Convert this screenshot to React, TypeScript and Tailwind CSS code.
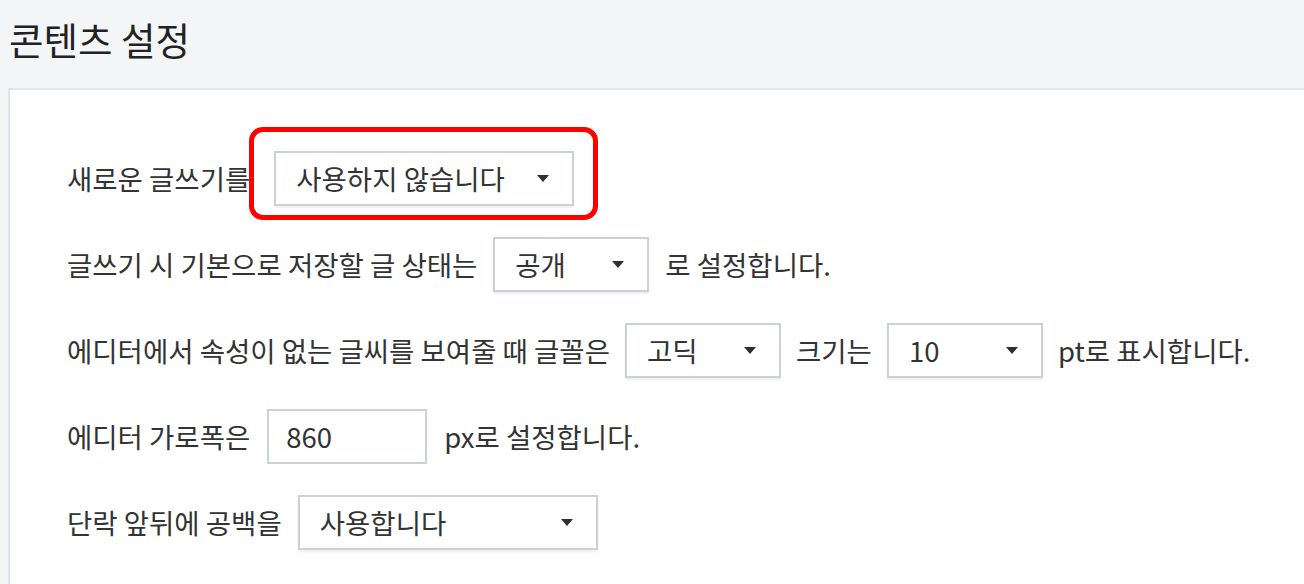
import React from "react";

const font = { fontFamily: '"Noto Sans CJK KR", "Noto Sans", sans-serif' };

function Caret() {
  return (
    <svg width="12" height="8" viewBox="0 0 12 8" className="shrink-0">
      <polygon points="0,0 12,0 6,7" fill="#2f2f2f" />
    </svg>
  );
}

function Select({ value, width }: { value: string; width: string }) {
  return (
    <div
      className={`${width} h-[55px] shrink-0 flex items-center justify-between pl-[20px] pr-[23px] border-2 border-[#cbd0da] bg-white shadow-[0_2px_2px_rgba(0,0,0,0.07)]`}
    >
      <span>{value}</span>
      <Caret />
    </div>
  );
}

export default function App() {
  return (
    <div
      className="w-[1304px] h-[584px] bg-[#f4f5f7] overflow-hidden text-[#333] flex flex-col"
      style={font}
    >
      <h1 className="text-[37.5px] leading-none text-[#222] pl-[9px] pt-[20px] h-[88px]">
        콘텐츠 설정
      </h1>
      <div className="ml-[8px] flex-1 bg-white border-l-2 border-t-2 border-[#e2e3ec] pl-[57px] pt-[61px] text-[27.5px] flex flex-col gap-[31px]">
        <div className="flex items-center gap-[24px] h-[55px]">
          <span>새로운 글쓰기를</span>
          <div className="relative">
            <Select value="사용하지 않습니다" width="w-[300px]" />
            <div className="absolute left-[-25px] top-[-24px] w-[349px] h-[93px] border-[5px] border-[#ff0000] rounded-[14px]" />
          </div>
        </div>
        <div className="flex items-center gap-[16px] h-[55px]">
          <span>글쓰기 시 기본으로 저장할 글 상태는</span>
          <Select value="공개" width="w-[156px]" />
          <span>로 설정합니다.</span>
        </div>
        <div className="flex items-center gap-[15px] h-[55px]">
          <span>에디터에서 속성이 없는 글씨를 보여줄 때 글꼴은</span>
          <Select value="고딕" width="w-[156px]" />
          <span>크기는</span>
          <Select value="10" width="w-[156px]" />
          <span>pt로 표시합니다.</span>
        </div>
        <div className="flex items-center gap-[17px] h-[55px]">
          <span>에디터 가로폭은</span>
          <div className="w-[160px] h-[55px] flex items-center pl-[17px] border-2 border-[#cbd0da] bg-white">
            860
          </div>
          <span>px로 설정합니다.</span>
        </div>
        <div className="flex items-center gap-[16px] h-[55px]">
          <span>단락 앞뒤에 공백을</span>
          <Select value="사용합니다" width="w-[300px]" />
        </div>
      </div>
    </div>
  );
}
